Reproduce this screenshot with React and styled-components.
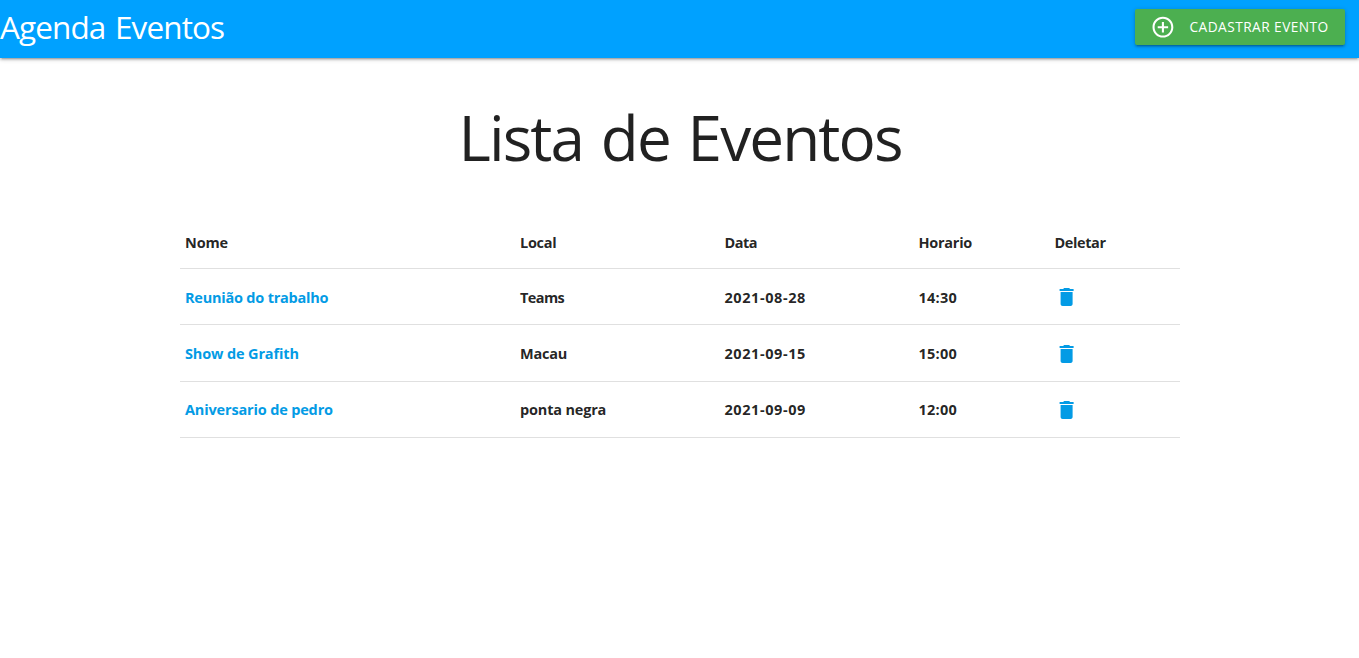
import React from "react";
import styled, { createGlobalStyle } from "styled-components";

const GlobalStyle = createGlobalStyle`
  * { box-sizing: border-box; }
  body {
    margin: 0;
    background: #fff;
    color: rgba(0, 0, 0, 0.87);
    font-family: "Segoe UI", "Open Sans", "Noto Sans", sans-serif;
    font-size: 15px;
    line-height: 1.5;
  }
`;

const NavBar = styled.nav`
  display: flex;
  align-items: center;
  justify-content: space-between;
  height: 58px;
  padding-right: 14px;
  padding-bottom: 4px;
  background: #00a1ff;
  color: #fff;
  box-shadow: 0 2px 2px 0 rgba(0, 0, 0, 0.14), 0 3px 1px -2px rgba(0, 0, 0, 0.12),
    0 1px 5px 0 rgba(0, 0, 0, 0.2);
`;

const Brand = styled.a`
  font-size: 31.5px;
  line-height: 54px;
  white-space: nowrap;
  letter-spacing: -0.9px;
  word-spacing: 2.3px;
`;

const Button = styled.button`
  display: flex;
  align-items: center;
  width: 210px;
  height: 36px;
  padding: 0 0 0 15.4px;
  border: 0;
  border-radius: 2px;
  background: #4caf50;
  color: #fff;
  font: 400 13.7px/36px "Segoe UI", "Open Sans", "Noto Sans", sans-serif;
  letter-spacing: 0.46px;
  text-transform: uppercase;
  white-space: nowrap;
  box-shadow: 0 2px 2px 0 rgba(0, 0, 0, 0.14), 0 3px 1px -2px rgba(0, 0, 0, 0.12),
    0 1px 5px 0 rgba(0, 0, 0, 0.2);
  svg { margin-right: 14.1px; flex: none; }
`;

const Container = styled.main`
  width: 1000px;
  margin-left: 180px;
`;

const Title = styled.h1`
  margin: 0;
  padding: 40px 0 38px;
  font-size: 62px;
  line-height: 79px;
  font-weight: 400;
  text-align: center;
  white-space: nowrap;
  letter-spacing: -1.9px;
  word-spacing: 3.6px;
`;

const Row = styled.div`
  display: grid;
  grid-template-columns: 335px 204.5px 194px 136px 1fr;
  align-items: center;
  height: ${(p) => (p.$head ? "54px" : "56.33px")};
  border-bottom: 1px solid rgba(0, 0, 0, 0.12);
`;

const Cell = styled.div`
  padding: 2px 5px 0;
  font-size: 14.5px;
  font-weight: 700;
  white-space: nowrap;
  line-height: 24px;
  letter-spacing: ${(p) => p.$track || 0}px;
`;

const IconCell = styled.div`
  padding: 1.6px 5px 0;
`;

const Link = styled.a`
  color: #039be5;
  text-decoration: none;
`;

const Glyph = styled.svg`
  display: block;
  fill: currentColor;
`;

const Icon = ({ size = 24, box = "0 0 24 24", d }) => (
  <Glyph width={size} height={size} viewBox={box}>
    <path d={d} />
  </Glyph>
);

const ADD =
  "M13 7h-2v4H7v2h4v4h2v-4h4v-2h-4V7zm-1-5C6.48 2 2 6.48 2 12s4.48 10 10 10 10-4.48 10-10S17.52 2 12 2zm0 18c-4.41 0-8-3.59-8-8s3.59-8 8-8 8 3.59 8 8-3.59 8-8 8z";
const TRASH =
  "M6 19c0 1.1.9 2 2 2h8c1.1 0 2-.9 2-2V7H6v12zM19 4h-3.5l-1-1h-5l-1 1H5v2h14V4z";

const columns = [
  { label: "Nome", track: -0.15 },
  { label: "Local", track: -0.3 },
  { label: "Data", track: -0.5 },
  { label: "Horario", track: -0.27 },
  { label: "Deletar", track: -0.4 },
];
const events = [
  { name: "Reunião do trabalho", place: "Teams", date: "2021-08-28", time: "14:30", tracks: [-0.22, -0.6] },
  { name: "Show de Grafith", place: "Macau", date: "2021-09-15", time: "15:00", tracks: [-0.14, -0.25] },
  { name: "Aniversario de pedro", place: "ponta negra", date: "2021-09-09", time: "12:00", tracks: [-0.16, -0.18] },
];

export default function App() {
  return (
    <>
      <GlobalStyle />
      <NavBar>
        <Brand>Agenda Eventos</Brand>
        <Button>
          <Icon size={25} box="-0.4 0.3 24 24" d={ADD} />
          Cadastrar Evento
        </Button>
      </NavBar>
      <Container>
        <Title>Lista de Eventos</Title>
        <Row $head>
          {columns.map((c) => (
            <Cell key={c.label} $track={c.track}>{c.label}</Cell>
          ))}
        </Row>
        {events.map((e) => (
          <Row key={e.name}>
            <Cell $track={e.tracks[0]}>
              <Link>{e.name}</Link>
            </Cell>
            <Cell $track={e.tracks[1]}>{e.place}</Cell>
            <Cell $track={0.58}>{e.date}</Cell>
            <Cell $track={0.25}>{e.time}</Cell>
            <IconCell>
              <Link>
                <Icon box="0.4 0 24 24" d={TRASH} />
              </Link>
            </IconCell>
          </Row>
        ))}
      </Container>
    </>
  );
}
